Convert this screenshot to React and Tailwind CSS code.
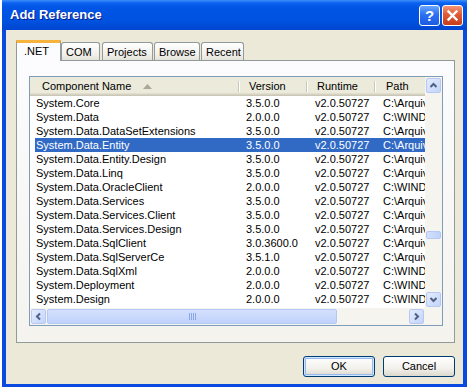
import React from 'react';

const ARQ = 'C:\\Arquivos de programas\\Reference Assemblies\\Microsoft\\Framework\\v3.5';
const WIN = 'C:\\WINDOWS\\Microsoft.NET\\Framework\\v2.0.50727';

const rows = [
  ['System.Core', '3.5.0.0', ARQ],
  ['System.Data', '2.0.0.0', WIN],
  ['System.Data.DataSetExtensions', '3.5.0.0', ARQ],
  ['System.Data.Entity', '3.5.0.0', ARQ],
  ['System.Data.Entity.Design', '3.5.0.0', ARQ],
  ['System.Data.Linq', '3.5.0.0', ARQ],
  ['System.Data.OracleClient', '2.0.0.0', WIN],
  ['System.Data.Services', '3.5.0.0', ARQ],
  ['System.Data.Services.Client', '3.5.0.0', ARQ],
  ['System.Data.Services.Design', '3.5.0.0', ARQ],
  ['System.Data.SqlClient', '3.0.3600.0', ARQ],
  ['System.Data.SqlServerCe', '3.5.1.0', ARQ],
  ['System.Data.SqlXml', '2.0.0.0', WIN],
  ['System.Deployment', '2.0.0.0', WIN],
  ['System.Design', '2.0.0.0', WIN],
];

const tabs = [
  { label: '.NET', w: 'w-[45px]', ml: '' },
  { label: 'COM', w: 'w-[39px]', ml: '' },
  { label: 'Projects', w: 'w-[51px]', ml: 'ml-[2px]' },
  { label: 'Browse', w: 'w-[46px]', ml: 'ml-[1px]' },
  { label: 'Recent', w: 'w-[43px]', ml: 'ml-[1px]' },
];

function Chevron({ dir }) {
  const d = {
    up: 'M2.5 7 L5.5 4 L8.5 7',
    down: 'M2.5 4 L5.5 7 L8.5 4',
    left: 'M7 2.5 L4 5.5 L7 8.5',
    right: 'M4 2.5 L7 5.5 L4 8.5',
  }[dir];
  return (
    <svg width="11" height="11" viewBox="0 0 11 11">
      <path d={d} fill="none" stroke="#4d6185" strokeWidth="2" />
    </svg>
  );
}

function ScrollBtn({ dir }) {
  return (
    <div className="flex h-[17px] w-[17px] shrink-0 items-center justify-center p-px">
      <div className="flex h-full w-full items-center justify-center rounded-[2px] border border-[#b7c9f2] bg-[linear-gradient(135deg,#e3ebfe,#c3d4fb)]">
        <Chevron dir={dir} />
      </div>
    </div>
  );
}

function HeaderCell({ label, w, pl, children }) {
  return (
    <div className={`flex h-full shrink-0 ${w}`}>
      <div className={`flex flex-1 items-center ${pl}`}>
        {label}
        {children}
      </div>
      <div className="my-[4px] w-px bg-[#cbc7b8]" />
      <div className="my-[4px] w-px bg-white" />
    </div>
  );
}

export default function App() {
  return (
    <div className="flex h-[387px] w-[467px] overflow-hidden bg-white font-['Liberation_Sans',Arial,sans-serif] text-[11px] text-black">
      <div className="w-[2px] bg-white" />
      <div className="flex flex-1 flex-col">

        {/* Title bar */}
        <div className="flex h-[30px] items-center pl-[8px] pr-[4px] bg-[linear-gradient(180deg,#3d8ff8_0%,#0b61f0_10%,#0055e5_25%,#0052e0_70%,#0045cf_100%)]">
          <span className="flex-1 text-[13px] font-bold text-white [text-shadow:1px_1px_0_#0a1a8a]">Add Reference</span>
          <div className="flex h-[21px] w-[21px] items-center justify-center rounded-[3px] border border-white bg-[linear-gradient(180deg,#6aa6ff,#2d70f2_45%,#1b5be0)] text-[15px] font-bold leading-none text-white">?</div>
          <div className="ml-[2px] flex h-[21px] w-[21px] items-center justify-center rounded-[3px] border border-white bg-[linear-gradient(180deg,#f29575,#e05a34_45%,#c73e1b)]">
            <svg width="13" height="13" viewBox="0 0 13 13">
              <path d="M2.5 2.5 L10.5 10.5 M10.5 2.5 L2.5 10.5" stroke="white" strokeWidth="2.4" strokeLinecap="square" />
            </svg>
          </div>
        </div>

        {/* Client area */}
        <div className="flex flex-1 flex-col border-x-4 border-b-[3px] border-[#0a4ae0] bg-[#ece9d8] pl-[10px] pr-[8px] pt-[10px]">

          {/* Tabs */}
          <div className="flex h-[20px] items-end">
            {tabs.map((t, i) => i === 0 ? (
              <div key={t.label} className={`relative z-10 -mb-px flex h-[21px] ${t.w} items-center border-x border-t-[3px] border-x-[#919b9c] border-t-[#f6b23c] bg-[#fcfcfe] pl-[7px] pb-[1px]`}>
                {t.label}
              </div>
            ) : (
              <div key={t.label} className={`flex h-[18px] ${t.w} ${t.ml} items-center rounded-t-[3px] border-x border-t border-[#919b9c] bg-[linear-gradient(180deg,#ffffff,#f0efe9_70%,#e4e2d8)] pl-[4px] pt-[1px]`}>
                {t.label}
              </div>
            ))}
          </div>

          {/* Tab panel */}
          <div className="h-[283px] border border-[#919b9c] bg-[linear-gradient(180deg,#fcfcfe,#f4f3ee)] pl-[12px] pt-[15px]">
            <div className="flex h-[250px] w-[414px] flex-col border border-[#7f9db9] bg-white">
              <div className="flex flex-1 overflow-hidden">

                {/* List content */}
                <div className="flex flex-1 flex-col overflow-hidden">
                  <div className="flex h-[19px] shrink-0 bg-[#ebeadb] shadow-[inset_0_-1px_0_#cbc7b8,inset_0_-2px_0_#d6d2c2,inset_0_-3px_0_#e2decd] whitespace-nowrap">
                    <HeaderCell label="Component Name" w="w-[210px]" pl="pl-[12px]">
                      <svg width="9" height="5" viewBox="0 0 9 5" className="ml-[12px]">
                        <path d="M0 5 L4.5 0 L9 5 Z" fill="#aca899" />
                      </svg>
                    </HeaderCell>
                    <HeaderCell label="Version" w="w-[68px]" pl="pl-[9px]" />
                    <HeaderCell label="Runtime" w="w-[68px]" pl="pl-[9px]" />
                    <div className="flex h-full shrink-0 items-center pl-[10px]">Path</div>
                  </div>
                  <div className="flex-1 overflow-hidden">
                    {rows.map((r, i) => (
                      <div key={r[0]} className={`ml-[5px] flex h-[14px] leading-[14px] whitespace-nowrap ${i === 3 ? 'bg-[#316ac5] text-white' : ''}`}>
                        <div className="w-[205px] shrink-0 pl-[1px]">{r[0]}</div>
                        <div className="w-[68px] shrink-0 pl-[6px]">{r[1]}</div>
                        <div className="w-[68px] shrink-0 pl-[7px]">v2.0.50727</div>
                        <div className="w-[49px] shrink-0 overflow-hidden pl-[7px]">{r[2]}</div>
                      </div>
                    ))}
                  </div>
                </div>

                {/* Vertical scrollbar */}
                <div className="flex w-[17px] shrink-0 flex-col bg-[#f5f4ef]">
                  <ScrollBtn dir="up" />
                  <div className="flex-1">
                    <div className="h-[137px]" />
                    <div className="mx-px h-[8px] rounded-[2px] border border-[#b4c8f6] bg-[linear-gradient(90deg,#d4e0fd,#c0d2fb)]" />
                  </div>
                  <ScrollBtn dir="down" />
                </div>
              </div>

              {/* Horizontal scrollbar */}
              <div className="flex h-[17px] shrink-0">
                <div className="flex flex-1 bg-[#f5f4ef]">
                  <ScrollBtn dir="left" />
                  <div className="flex-1">
                    <div className="my-px flex h-[15px] w-[290px] items-center justify-center rounded-[2px] border border-[#b4c8f6] bg-[linear-gradient(180deg,#d4e0fd,#c0d2fb)]">
                      <div className="flex gap-px">
                        {[0, 1, 2, 3].map(k => <div key={k} className="h-[7px] w-px bg-[#8ca8e8]" />)}
                      </div>
                    </div>
                  </div>
                  <ScrollBtn dir="right" />
                </div>
                <div className="w-[17px] bg-[#f5f4ef]" />
              </div>
            </div>
          </div>

          {/* Buttons */}
          <div className="mt-[13px] flex justify-end gap-[8px]">
            <button className="flex h-[21px] w-[72px] items-center justify-center rounded-[3px] border border-[#003c74] bg-[linear-gradient(180deg,#ffffff,#f2f1ec_60%,#dcd8cc)] shadow-[inset_0_0_0_1px_#cee7ff,inset_0_0_0_2px_#98b8f0] text-[11px]">OK</button>
            <button className="flex h-[21px] w-[72px] items-center justify-center rounded-[3px] border border-[#003c74] bg-[linear-gradient(180deg,#ffffff,#f2f1ec_60%,#dcd8cc)] text-[11px]">Cancel</button>
          </div>
        </div>
      </div>
    </div>
  );
}
